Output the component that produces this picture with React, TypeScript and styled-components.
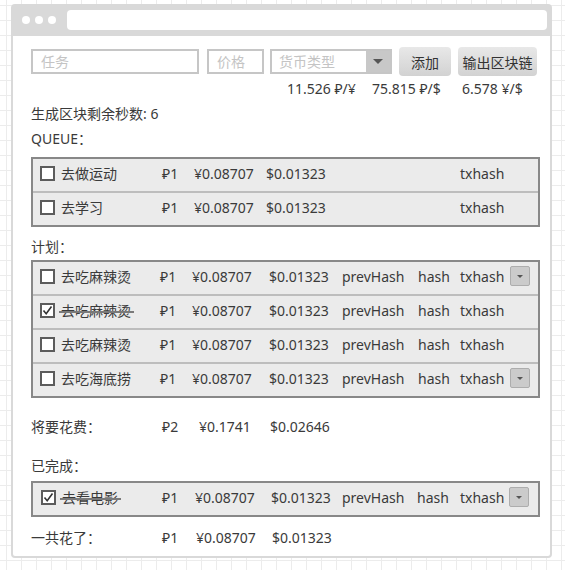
import React from "react";
import styled, { createGlobalStyle } from "styled-components";

const GlobalStyle = createGlobalStyle`
  html, body { margin: 0; padding: 0; }
  body {
    width: 565px;
    height: 570px;
    overflow: hidden;
    background-color: #fff;
    background-image:
      linear-gradient(#ececec 1px, transparent 1px),
      linear-gradient(90deg, #ececec 1px, transparent 1px);
    background-size: 15px 15px;
    background-position: 6px 5px;
    font-family: "Noto Sans", "Noto Sans CJK SC", sans-serif;
    font-size: 14px;
    color: #3a3a3a;
  }
`;

const Window = styled.div`
  box-sizing: border-box;
  margin: 4px 0 0 11px;
  width: 541px;
  height: 554px;
  border: 2px solid #d9d9d9;
  border-radius: 4px;
  background: #fff;
  display: flex;
  flex-direction: column;
`;

const TitleBar = styled.div`
  height: 30px;
  background: #d9d9d9;
  display: flex;
  align-items: flex-start;
  padding: 4px 3px 0 9px;
  box-sizing: border-box;
`;

const Dots = styled.div`
  display: flex;
  gap: 5px;
  margin-top: 6px;
  margin-right: 11px;
`;

const Dot = styled.span`
  width: 8px;
  height: 8px;
  border-radius: 50%;
  background: #fff;
`;

const AddressBar = styled.div`
  flex: 1;
  height: 20px;
  background: #fff;
  border-radius: 4px;
`;

const Content = styled.div`
  padding: 11px 0 0 18px;
  display: flex;
  flex-direction: column;
`;

const FormRow = styled.div`
  display: flex;
  align-items: center;
  height: 29px;
`;

const TextInput = styled.input<{ $w: number; $mr: number }>`
  box-sizing: border-box;
  width: ${(p) => p.$w}px;
  height: 25px;
  margin-right: ${(p) => p.$mr}px;
  border: 2px solid #c6c6c6;
  padding: 0 8px;
  font-family: inherit;
  font-size: 14px;
  color: #333;
  outline: none;
  &::placeholder { color: #c4c4c4; }
`;

const Select = styled.div`
  box-sizing: border-box;
  width: 122px;
  height: 25px;
  margin-right: 7px;
  border: 2px solid #c6c6c6;
  display: flex;
`;

const SelectText = styled.span`
  flex: 1;
  padding-left: 7px;
  line-height: 21px;
  color: #c4c4c4;
`;

const SelectArrow = styled.span`
  width: 24px;
  background: #c8c8c8;
  display: flex;
  align-items: center;
  justify-content: center;
`;

const Triangle = styled.span<{ $size: number }>`
  width: 0;
  height: 0;
  border-left: ${(p) => p.$size}px solid transparent;
  border-right: ${(p) => p.$size}px solid transparent;
  border-top: ${(p) => p.$size}px solid #555;
`;

const Button = styled.button<{ $w: number; $mr?: number }>`
  box-sizing: border-box;
  width: ${(p) => p.$w}px;
  height: 29px;
  margin-right: ${(p) => p.$mr ?? 0}px;
  border: none;
  border-radius: 4px;
  background: linear-gradient(#e8e8e8, #d2d2d2);
  font-family: inherit;
  font-size: 14px;
  color: #333;
  padding: 0;
`;

const Rates = styled.div`
  display: flex;
  margin-top: 3px;
  height: 20px;
  line-height: 20px;
  padding-left: 256px;
`;

const Cell = styled.span<{ $w?: number }>`
  flex: none;
  ${(p) => (p.$w ? `width: ${p.$w}px;` : "")}
  white-space: nowrap;
`;

const Line = styled.div<{ $mt: number }>`
  display: flex;
  margin-top: ${(p) => p.$mt}px;
  height: 20px;
  line-height: 20px;
`;

const Table = styled.div<{ $mt: number }>`
  box-sizing: border-box;
  width: 509px;
  margin-top: ${(p) => p.$mt}px;
  border: 2px solid #888;
  background: #ebebeb;
`;

const Row = styled.div<{ $divider: string; $pl: number }>`
  display: flex;
  align-items: center;
  height: 28px;
  padding-bottom: 4px;
  padding-left: ${(p) => p.$pl}px;
  & + & {
    border-top: 2px solid ${(p) => p.$divider};
  }
`;

const Box = styled.span`
  box-sizing: border-box;
  flex: none;
  width: 15px;
  height: 15px;
  margin-right: 6px;
  border: 2px solid #5c5c5c;
  background: #fff;
  display: flex;
  align-items: center;
  justify-content: center;
`;

const Name = styled.span<{ $w: number; $done?: boolean }>`
  flex: none;
  width: ${(p) => p.$w}px;
  white-space: nowrap;
`;

const Struck = styled.span`
  position: relative;
  &::after {
    content: "";
    position: absolute;
    left: -2px;
    right: -3px;
    top: 55%;
    height: 1.5px;
    background: #7a7a7a;
  }
`;

const MiniDrop = styled.span`
  box-sizing: border-box;
  flex: none;
  width: 20px;
  height: 20px;
  border: 1px solid #adadad;
  border-radius: 2px;
  background: #cbcbcb;
  display: flex;
  align-items: center;
  justify-content: center;
`;

function Checkbox({ checked }: { checked?: boolean }) {
  return (
    <Box>
      {checked && (
        <svg width="11" height="11" viewBox="0 0 11 11">
          <polyline points="1.5,5.5 4.2,8.8 9.5,1.5" fill="none" stroke="#333" strokeWidth="1.6" />
        </svg>
      )}
    </Box>
  );
}

type Item = { name: string; done?: boolean; drop?: boolean; full?: boolean };

function TaskRow({ item, cols, divider, pl }: { item: Item; cols: number[]; divider: string; pl: number }) {
  const values = item.full
    ? ["₽1", "¥0.08707", "$0.01323", "prevHash", "hash", "txhash"]
    : ["₽1", "¥0.08707", "$0.01323", "txhash"];
  return (
    <Row $divider={divider} $pl={pl}>
      <Checkbox checked={item.done} />
      <Name $w={cols[0]}>{item.done ? <Struck>{item.name}</Struck> : item.name}</Name>
      {values.map((v, i) => (
        <Cell key={i} $w={cols[i + 1]}>{v}</Cell>
      ))}
      {item.drop && (
        <MiniDrop>
          <Triangle $size={3} />
        </MiniDrop>
      )}
    </Row>
  );
}

const queueCols = [101, 32, 72, 194, 50];
const planCols = [99, 32, 77, 73, 76, 42, 50];
const doneCols = [100, 33, 76, 71, 75, 43, 49];

export default function App() {
  return (
    <>
      <GlobalStyle />
      <Window>
        <TitleBar>
          <Dots>
            <Dot />
            <Dot />
            <Dot />
          </Dots>
          <AddressBar />
        </TitleBar>
        <Content>
          <FormRow>
            <TextInput $w={168} $mr={8} placeholder="任务" />
            <TextInput $w={57} $mr={6} placeholder="价格" />
            <Select>
              <SelectText>货币类型</SelectText>
              <SelectArrow>
                <Triangle $size={5} />
              </SelectArrow>
            </Select>
            <Button $w={52} $mr={7}>添加</Button>
            <Button $w={79}>输出区块链</Button>
          </FormRow>
          <Rates>
            <Cell $w={85}>11.526 ₽/¥</Cell>
            <Cell $w={90}>75.815 ₽/$</Cell>
            <Cell>6.578 ¥/$</Cell>
          </Rates>
          <Line $mt={5}>生成区块剩余秒数: 6</Line>
          <Line $mt={5}>QUEUE：</Line>
          <Table $mt={8}>
            <TaskRow item={{ name: "去做运动" }} cols={queueCols} divider="#888" pl={7} />
            <TaskRow item={{ name: "去学习" }} cols={queueCols} divider="#888" pl={7} />
          </Table>
          <Line $mt={10}>计划：</Line>
          <Table $mt={3}>
            <TaskRow item={{ name: "去吃麻辣烫", full: true, drop: true }} cols={planCols} divider="#bdbdbd" pl={7} />
            <TaskRow item={{ name: "去吃麻辣烫", full: true, done: true }} cols={planCols} divider="#bdbdbd" pl={7} />
            <TaskRow item={{ name: "去吃麻辣烫", full: true }} cols={planCols} divider="#bdbdbd" pl={7} />
            <TaskRow item={{ name: "去吃海底捞", full: true, drop: true }} cols={planCols} divider="#bdbdbd" pl={7} />
          </Table>
          <Line $mt={19}>
            <Cell $w={131}>将要花费：</Cell>
            <Cell $w={37}>₽2</Cell>
            <Cell $w={71}>¥0.1741</Cell>
            <Cell>$0.02646</Cell>
          </Line>
          <Line $mt={19}>已完成：</Line>
          <Table $mt={5}>
            <TaskRow item={{ name: "去看电影", full: true, done: true, drop: true }} cols={doneCols} divider="#bdbdbd" pl={8} />
          </Table>
          <Line $mt={11}>
            <Cell $w={131}>一共花了：</Cell>
            <Cell $w={34}>₽1</Cell>
            <Cell $w={76}>¥0.08707</Cell>
            <Cell>$0.01323</Cell>
          </Line>
        </Content>
      </Window>
    </>
  );
}
